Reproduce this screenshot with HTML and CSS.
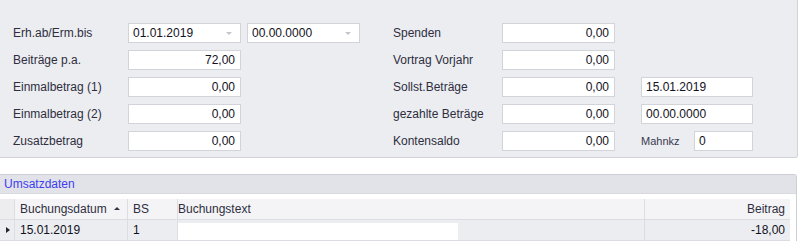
FILE: index.html
```html
<!DOCTYPE html>
<html lang="de">
<head>
    <meta charset="UTF-8">
    <title>Beiträge</title>
    <link rel="stylesheet" href="styles.css">
</head>
<body>
    <div class="panel">
        <div class="form-grid">
            <label class="lbl c1">Erh.ab/Erm.bis</label>
            <div class="field combo c2">01.01.2019<span class="arrow"></span></div>
            <div class="field combo c3">00.00.0000<span class="arrow"></span></div>
            <label class="lbl c4">Spenden</label>
            <div class="field num c5">0,00</div>

            <label class="lbl c1">Beiträge p.a.</label>
            <div class="field num c2">72,00</div>
            <label class="lbl c4">Vortrag Vorjahr</label>
            <div class="field num c5">0,00</div>

            <label class="lbl c1">Einmalbetrag (1)</label>
            <div class="field num c2">0,00</div>
            <label class="lbl c4">Sollst.Beträge</label>
            <div class="field num c5">0,00</div>
            <div class="field c6">15.01.2019</div>

            <label class="lbl c1">Einmalbetrag (2)</label>
            <div class="field num c2">0,00</div>
            <label class="lbl c4">gezahlte Beträge</label>
            <div class="field num c5">0,00</div>
            <div class="field c6">00.00.0000</div>

            <label class="lbl c1">Zusatzbetrag</label>
            <div class="field num c2">0,00</div>
            <label class="lbl c4">Kontensaldo</label>
            <div class="field num c5">0,00</div>
            <div class="mahn c6">
                <label class="lbl small">Mahnkz</label>
                <div class="field">0</div>
            </div>
        </div>
    </div>

    <div class="group">
        <div class="group-caption">Umsatzdaten</div>
        <div class="grid">
            <div class="row head">
                <div class="cell ind"></div>
                <div class="cell datum">Buchungsdatum<span class="sort"></span></div>
                <div class="cell bs">BS</div>
                <div class="cell text">Buchungstext</div>
                <div class="cell betrag">Beitrag</div>
            </div>
            <div class="row data">
                <div class="cell ind"><span class="pointer"></span></div>
                <div class="cell datum">15.01.2019</div>
                <div class="cell bs">1</div>
                <div class="cell text"><span class="blank"></span></div>
                <div class="cell betrag">-18,00</div>
            </div>
        </div>
    </div>
</body>
</html>
```

FILE: styles.css
```css
body {
    margin: 0;
    background-color: #ffffff;
    font-family: 'Liberation Sans', Arial, sans-serif;
    font-size: 12px;
    color: #1f1f2b;
}

.panel {
    width: 797px;
    height: 157px;
    background-color: #ecedf1;
    border-right: 1px solid #d2d3d8;
    border-bottom: 1px solid #d2d3d8;
    border-bottom-right-radius: 3px;
    box-sizing: content-box;
}

.form-grid {
    display: grid;
    grid-template-columns: 115px 113px 6px 113px 33px 109px 113px 26px 112px;
    grid-auto-rows: 20px;
    row-gap: 7px;
    padding: 23px 0 0 13px;
}

.c1 { grid-column: 1; }
.c2 { grid-column: 2; }
.c3 { grid-column: 4; }
.c4 { grid-column: 6; }
.c5 { grid-column: 7; }
.c6 { grid-column: 9; }

.lbl {
    display: flex;
    align-items: center;
    color: #2e2e40;
    white-space: nowrap;
}

.field {
    display: flex;
    align-items: center;
    position: relative;
    height: 20px;
    box-sizing: border-box;
    padding: 0 4px;
    background-color: #ffffff;
    border: 1px solid #d3d4d9;
    color: #111122;
}

.num {
    justify-content: flex-end;
    padding-right: 5px;
}

.combo .arrow {
    position: absolute;
    right: 8px;
    top: 8px;
    border-left: 3px solid transparent;
    border-right: 3px solid transparent;
    border-top: 3px solid #c4c5cc;
}

.mahn {
    display: flex;
    align-items: center;
}

.mahn .small {
    width: 53px;
    font-size: 11px;
    color: #3a3a50;
}

.mahn .field {
    flex: 1;
    padding-left: 4px;
}

.group {
    margin-top: 16px;
    width: 796px;
    border-top: 1px solid #cfd0d5;
    border-right: 1px solid #cfd0d5;
    border-top-right-radius: 3px;
}

.group-caption {
    height: 18px;
    line-height: 18px;
    padding-left: 4px;
    background-color: #e2e3e8;
    color: #3d3df2;
    border-bottom: 1px solid #d9dae0;
}

.grid {
    padding-top: 5px;
    background-color: #ffffff;
    width: 790px;
}

.row {
    display: flex;
    height: 20px;
    border-bottom: 1px solid #dcdde2;
}

.head {
    background-color: #f4f4f6;
    color: #2e2e40;
}

.data {
    background-color: #ecedf0;
    color: #111122;
}

.cell {
    display: flex;
    align-items: center;
    position: relative;
    padding: 0 5px;
    border-right: 1px solid #dcdde2;
    box-sizing: border-box;
}

.ind { width: 15px; padding: 0; justify-content: center; }
.datum { width: 113px; }
.bs { width: 50px; }
.text { width: 467px; padding: 0; }
.betrag { flex: 1; justify-content: flex-end; border-right: none; }

.head .ind { background-color: #ededf0; }

.sort {
    position: absolute;
    right: 7px;
    top: 8px;
    border-left: 3px solid transparent;
    border-right: 3px solid transparent;
    border-bottom: 3px solid #333344;
}

.pointer {
    border-top: 3px solid transparent;
    border-bottom: 3px solid transparent;
    border-left: 4px solid #222230;
    margin-left: 1px;
}

.blank {
    display: block;
    width: 280px;
    height: 17px;
    margin-top: 3px;
    background-color: #ffffff;
}
```
